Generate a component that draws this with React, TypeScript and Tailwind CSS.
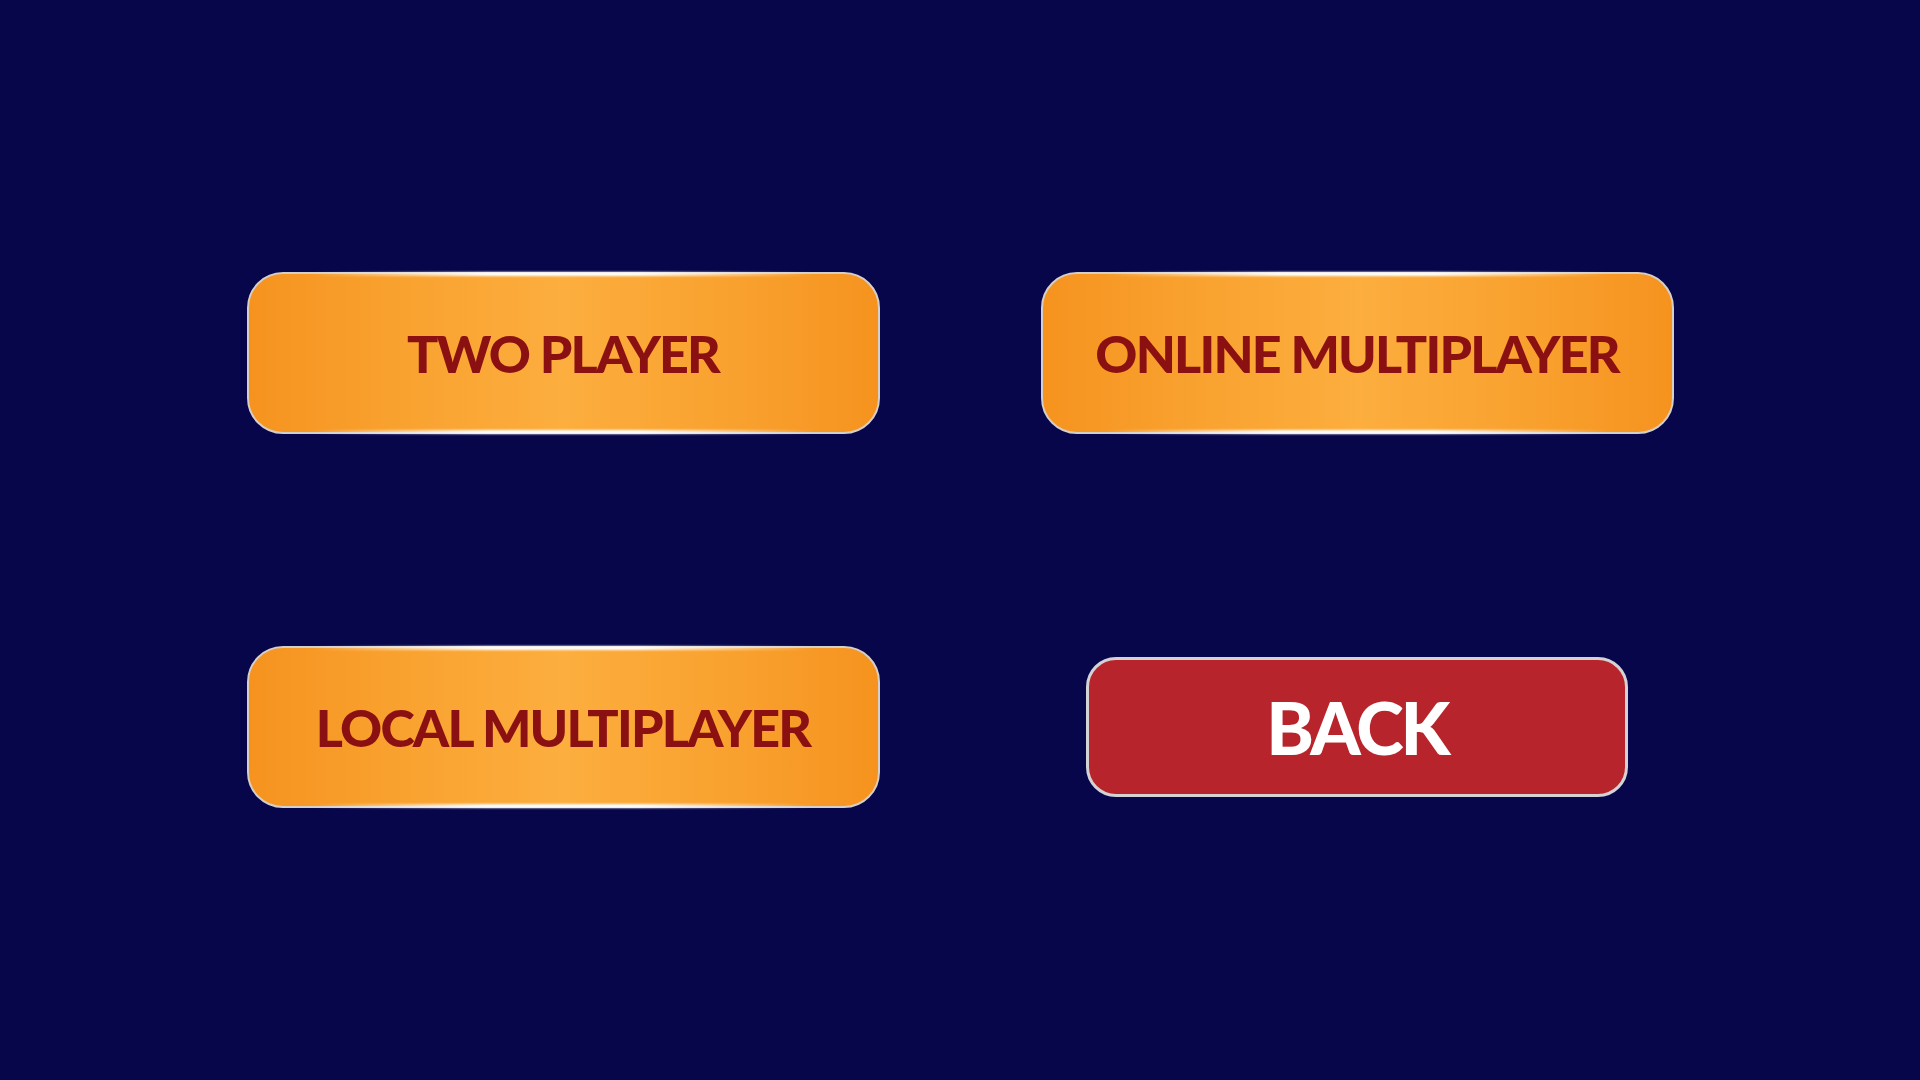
import type { ReactNode } from 'react';

const labelFont = { fontFamily: 'Lato, "Open Sans", sans-serif' };

function Shine() {
  // soft white glints along the top and bottom rims
  return (
    <>
      <span className="pointer-events-none absolute left-[10%] right-[10%] top-[-2px] h-[4px] rounded-full bg-[linear-gradient(90deg,transparent,#ffffff_35%,#ffffff_65%,transparent)] blur-[1px]" />
      <span className="pointer-events-none absolute left-[10%] right-[10%] bottom-[-2px] h-[4px] rounded-full bg-[linear-gradient(90deg,transparent,#ffffff_35%,#ffffff_65%,transparent)] blur-[1px]" />
    </>
  );
}

function MenuButton({ children }: { children: ReactNode }) {
  return (
    <button className="relative flex h-[162px] w-[633px] items-center justify-center rounded-[36px] border-2 border-[#d6cfc8] bg-[linear-gradient(90deg,#f6931f_0%,#f9a230_25%,#fcae3e_50%,#f9a230_75%,#f6931f_100%)]">
      <Shine />
      <span
        style={labelFont}
        className="text-[52px] font-black uppercase tracking-[-1.8px] text-[#8a1012]"
      >
        {children}
      </span>
    </button>
  );
}

export default function App() {
  return (
    <div className="flex min-h-screen items-center justify-center bg-[#07064a]">
      <div className="grid grid-cols-[633px_633px] gap-x-[161px] gap-y-[212px]">
        <MenuButton>Two Player</MenuButton>
        <MenuButton>Online Multiplayer</MenuButton>
        <MenuButton>Local Multiplayer</MenuButton>
        <button className="flex h-[140px] w-[542px] items-center justify-center place-self-center rounded-[30px] border-[3px] border-[#d3d3d6] bg-[#b8242b]">
          <span style={labelFont} className="text-[72px] font-black tracking-[-3px] text-white">
            BACK
          </span>
        </button>
      </div>
    </div>
  );
}
